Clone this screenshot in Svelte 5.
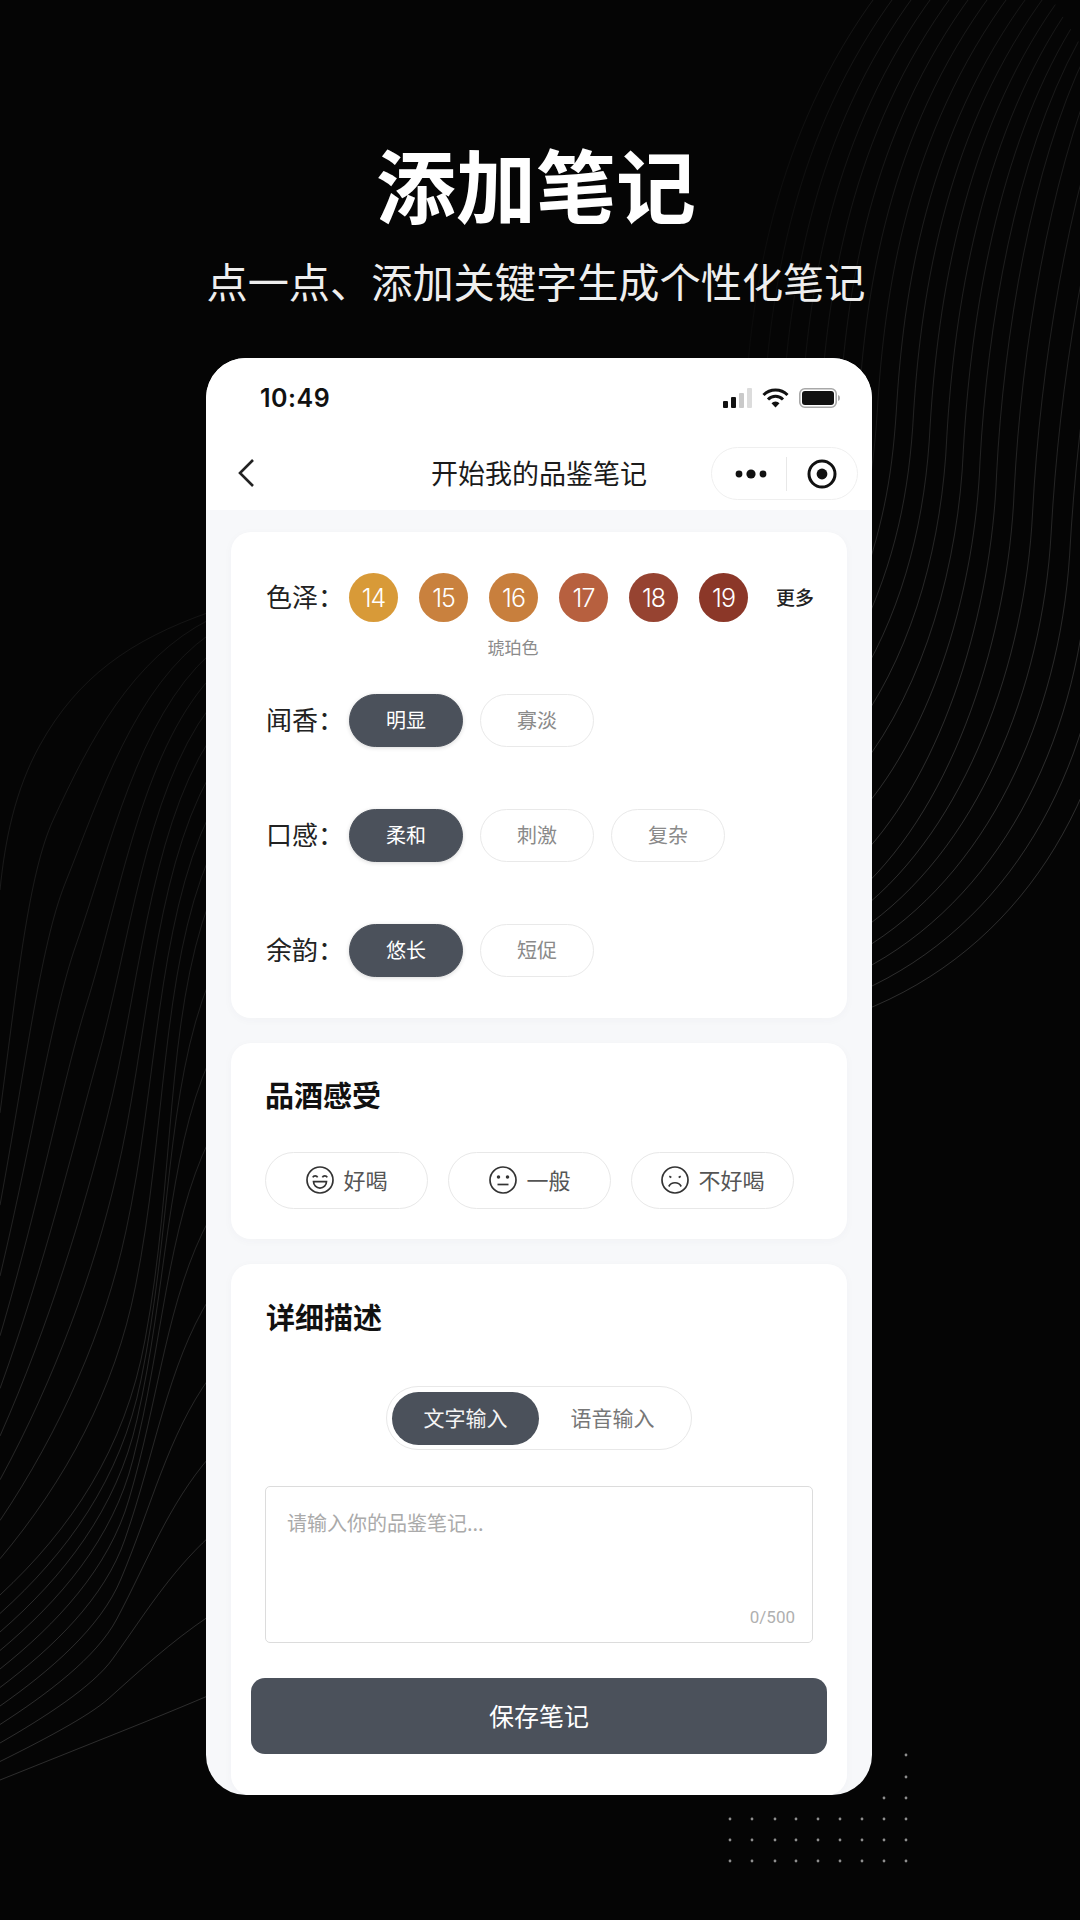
<script>
	const swatches = [
		{ n: 14, c: '#d89a38' },
		{ n: 15, c: '#c9813e' },
		{ n: 16, c: '#c87f3d' },
		{ n: 17, c: '#b7603f' },
		{ n: 18, c: '#964331' },
		{ n: 19, c: '#8b3728' }
	];
	const rows = [
		{ label: '闻香：', opts: ['明显', '寡淡'] },
		{ label: '口感：', opts: ['柔和', '刺激', '复杂'] },
		{ label: '余韵：', opts: ['悠长', '短促'] }
	];

	const lerp = (a, b, t) => [a[0] + (b[0] - a[0]) * t, a[1] + (b[1] - a[1]) * t];
	const toPath = (p) =>
		`M${p[0]} C${p[1]} ${p[2]} ${p[3]} C${p[4]} ${p[5]} ${p[6]}`.replace(/(\d+\.\d)\d+/g, '$1');

	// the wave backgrounds: each line is a blend of three hand placed key curves
	const rightKeys = [
		[[860, 590], [885, 520], [893, 470], [897, 400], [905, 280], [930, 120], [1040, -20]],
		[[860, 880], [950, 790], [1000, 620], [1005, 480], [1012, 340], [1040, 170], [1090, 60]],
		[[860, 1012], [1020, 950], [1110, 800], [1125, 620], [1135, 450], [1160, 300], [1200, 100]]
	];
	const leftKeys = [
		[[0, 890], [5, 840], [15, 790], [40, 745], [77.5, 677.5], [130, 640], [210, 612]],
		[[0, 1595], [70, 1530], [125, 1450], [145, 1340], [175, 1180], [165, 1020], [210, 900]],
		[[0, 1780], [35, 1766], [85, 1746], [105, 1738], [135, 1726], [170, 1712], [210, 1695]]
	];
	const easing = [0.5, 0.7, 0.9, 0.9, 0.9, 1.3, 1.6];

	const rightLines = Array.from({ length: 14 }, (_, i) => {
		const u = i / 13;
		const [a, b, t] =
			u < 0.5 ? [rightKeys[0], rightKeys[1], u * 2] : [rightKeys[1], rightKeys[2], u * 2 - 1];
		return toPath(a.map((p, k) => lerp(p, b[k], t)));
	});
	// these run on above the phone, towards the title
	const upperLines = Array.from({ length: 8 }, (_, i) =>
		toPath(rightKeys[0].map(([x, y]) => [x - 19 * (i + 1), y]))
	);
	const leftLines = Array.from({ length: 21 }, (_, i) => {
		const u = i / 20;
		const [a, b, t] =
			u < 0.5 ? [leftKeys[0], leftKeys[1], u * 2] : [leftKeys[1], leftKeys[2], u * 2 - 1];
		return toPath(a.map((p, k) => lerp(p, b[k], u < 0.5 ? Math.pow(t, easing[k]) : t)));
	});

	const dots = [];
	for (const y of [1819, 1840, 1861]) {
		for (const x of [730, 752, 775, 796, 818, 840, 862, 884, 906]) dots.push([x, y]);
	}
	dots.push([884, 1798], [906, 1798], [906, 1777], [906, 1755]);
</script>

<div class="page">
	<svg class="waves" width="1080" height="1920" viewBox="0 0 1080 1920" fill="none">
		<defs>
			<linearGradient id="fade" gradientUnits="userSpaceOnUse" x1="0" y1="0" x2="0" y2="800">
				<stop offset="0" stop-color="#fff" stop-opacity="0.07" />
				<stop offset="1" stop-color="#fff" stop-opacity="0.16" />
			</linearGradient>
			<linearGradient id="fade-top" gradientUnits="userSpaceOnUse" x1="740" y1="0" x2="900" y2="0">
				<stop offset="0" stop-color="#fff" stop-opacity="0.02" />
				<stop offset="1" stop-color="#fff" stop-opacity="0.08" />
			</linearGradient>
			<linearGradient id="fade-left" gradientUnits="userSpaceOnUse" x1="0" y1="620" x2="0" y2="1700">
				<stop offset="0" stop-color="#fff" stop-opacity="0.06" />
				<stop offset="1" stop-color="#fff" stop-opacity="0.16" />
			</linearGradient>
		</defs>
		{#each rightLines as d}
			<path {d} stroke="url(#fade)" />
		{/each}
		{#each upperLines as d}
			<path {d} stroke="url(#fade-top)" />
		{/each}
		{#each leftLines as d}
			<path {d} stroke="url(#fade-left)" />
		{/each}
		{#each dots as [x, y]}
			<circle cx={x} cy={y} r="1.4" fill="#8e8e8e" />
		{/each}
	</svg>

	<h1>添加笔记</h1>
	<p class="sub">点一点、添加关键字生成个性化笔记</p>

	<div class="phone">
		<div class="status">
			<span class="time">10:49</span>
			<div class="status-icons">
				<svg width="29" height="20" viewBox="0 0 29 20">
					<rect x="0" y="13" width="5" height="7" rx="1" fill="#111" />
					<rect x="8" y="9" width="5" height="11" rx="1" fill="#111" />
					<rect x="16" y="5" width="5" height="15" rx="1" fill="#c9c9c9" />
					<rect x="24" y="0" width="5" height="20" rx="1" fill="#dcdcdc" />
				</svg>
				<svg width="27" height="20" viewBox="0 0 27 20" fill="none" stroke="#111" stroke-width="3">
					<path d="M1.5 7a17 17 0 0 1 24 0" />
					<path d="M6 11.5a10.5 10.5 0 0 1 15 0" />
					<path d="M13.5 19.5l-4-4.2a5.6 5.6 0 0 1 8 0z" fill="#111" stroke="none" />
				</svg>
				<svg width="42" height="20" viewBox="0 0 42 20">
					<rect x="0.8" y="0.8" width="36.4" height="18.4" rx="5" fill="none" stroke="#a8a8a8" stroke-width="1.6" />
					<rect x="3" y="3" width="32" height="14" rx="3" fill="#111" />
					<path d="M39 7v6a3 3 0 0 0 2-3 3 3 0 0 0-2-3z" fill="#a8a8a8" />
				</svg>
			</div>
		</div>

		<div class="nav">
			<svg class="back" width="18" height="30" viewBox="0 0 18 30" fill="none" stroke="#222" stroke-width="2.6">
				<path d="M16 2 3 15l13 13" />
			</svg>
			<span class="nav-title">开始我的品鉴笔记</span>
			<div class="capsule">
				<svg width="32" height="12" viewBox="0 0 32 12" fill="#111">
					<circle cx="4" cy="6" r="3.4" />
					<circle cx="16" cy="6" r="4.6" />
					<circle cx="28" cy="6" r="3.4" />
				</svg>
				<i class="capsule-line"></i>
				<svg width="30" height="30" viewBox="0 0 30 30">
					<circle cx="15" cy="15" r="13" fill="none" stroke="#111" stroke-width="3" />
					<circle cx="15" cy="15" r="5.4" fill="#111" />
				</svg>
			</div>
		</div>

		<div class="body">
			<section class="card notes">
				<div class="row">
					<span class="label">色泽：</span>
					<div class="swatches">
						{#each swatches as s}
							<span class="swatch" style="background-color: {s.c}">{s.n}</span>
						{/each}
					</div>
					<span class="more">更多</span>
				</div>
				<div class="caption">琥珀色</div>
				<div class="rows">
					{#each rows as row}
						<div class="row">
							<span class="label">{row.label}</span>
							<div class="pills">
								{#each row.opts as opt, i}
									<span class="pill" class:on={i === 0}>{opt}</span>
								{/each}
							</div>
						</div>
					{/each}
				</div>
			</section>

			<section class="card feel">
				<h2>品酒感受</h2>
				<div class="moods">
					<div class="mood">
						<svg width="30" height="30" viewBox="0 0 30 30" fill="none" stroke="#333" stroke-width="1.7">
							<circle cx="15" cy="15" r="13" />
							<path d="M7.8 12.4a2.6 2.6 0 0 1 4.8 0M17.4 12.4a2.6 2.6 0 0 1 4.8 0" />
							<path d="M8.5 16.6h13a6.5 6.5 0 0 1-13 0z" />
						</svg>
						<span>好喝</span>
					</div>
					<div class="mood">
						<svg width="30" height="30" viewBox="0 0 30 30" fill="none" stroke="#333" stroke-width="1.7">
							<circle cx="15" cy="15" r="13" />
							<circle cx="10.5" cy="12" r="0.9" fill="#333" />
							<circle cx="19.5" cy="12" r="0.9" fill="#333" />
							<path d="M9.5 19.5h11" />
						</svg>
						<span>一般</span>
					</div>
					<div class="mood">
						<svg width="30" height="30" viewBox="0 0 30 30" fill="none" stroke="#333" stroke-width="1.7">
							<circle cx="15" cy="15" r="13" />
							<path d="M9.3 11.2l2 1.2M20.7 11.2l-2 1.2" />
							<path d="M8.8 21.5a7 7 0 0 1 12.4 0" />
						</svg>
						<span>不好喝</span>
					</div>
				</div>
			</section>

			<section class="card detail">
				<h2>详细描述</h2>
				<div class="switch">
					<span class="tab on">文字输入</span>
					<span class="tab">语音输入</span>
				</div>
				<div class="input">
					<span class="placeholder">请输入你的品鉴笔记...</span>
					<span class="count">0/500</span>
				</div>
				<button class="save">保存笔记</button>
			</section>
		</div>
	</div>
</div>

<style>
	:global(body) {
		background: #050505;
	}
	.page {
		position: relative;
		width: 1080px;
		height: 1920px;
		overflow: hidden;
		background: #050505;
		display: flex;
		flex-direction: column;
		align-items: center;
		font-family: 'Noto Sans CJK SC', 'Noto Sans', sans-serif;
	}
	.waves {
		position: absolute;
		left: 0;
		top: 0;
	}
	h1 {
		position: relative;
		margin: 137px 8px 0 0;
		color: #fff;
		font-size: 80px;
		line-height: 90px;
		font-weight: 700;
	}
	.sub {
		position: relative;
		margin: 28px 8px 0 0;
		color: #eee;
		font-size: 41.2px;
		line-height: 50px;
		font-weight: 400;
	}
	.phone {
		position: relative;
		width: 666px;
		height: 1437px;
		margin: 53px 2px 0 0;
		border-radius: 40px;
		background: #f7f8fa;
		overflow: hidden;
		display: flex;
		flex-direction: column;
	}
	.status {
		height: 80px;
		background: #fff;
		display: flex;
		align-items: center;
		justify-content: space-between;
		padding: 0 31px 0 54px;
	}
	.time {
		font-family: Inter, sans-serif;
		font-size: 25px;
		font-weight: 600;
		color: #111;
		letter-spacing: 0.5px;
	}
	.status-icons {
		display: flex;
		align-items: center;
		gap: 10px;
	}
	.nav {
		position: relative;
		height: 72px;
		background: #fff;
		display: flex;
		align-items: center;
		justify-content: center;
		padding-bottom: 4px;
		box-sizing: border-box;
	}
	.back {
		position: absolute;
		left: 31px;
		top: 20px;
	}
	.nav-title {
		font-size: 27px;
		color: #1b1b1b;
	}
	.capsule {
		position: absolute;
		right: 14px;
		top: 9px;
		width: 147px;
		height: 53px;
		box-sizing: border-box;
		border: 1px solid #efefef;
		border-radius: 27px;
		display: flex;
		align-items: center;
		padding-left: 23px;
	}
	.capsule-line {
		width: 1px;
		height: 34px;
		margin: 0 20px 0 19px;
		background: #e8e8e8;
	}
	.body {
		flex: 1;
		padding: 22px 25px 0;
		display: flex;
		flex-direction: column;
		gap: 25px;
	}
	.card {
		background: #fff;
		border-radius: 20px;
		padding: 0 35px;
		box-shadow: 0 2px 10px rgba(60, 70, 90, 0.03);
	}
	.notes {
		height: 486px;
		box-sizing: border-box;
		padding-top: 39px;
	}
	.row {
		display: flex;
		align-items: center;
		height: 53px;
	}
	.label {
		width: 83px;
		flex: none;
		padding-bottom: 4px;
		font-size: 26px;
		color: #222;
	}
	.swatches {
		display: flex;
		flex: none;
		gap: 21px;
	}
	.swatch {
		width: 49px;
		height: 49px;
		border-radius: 50%;
		display: flex;
		align-items: center;
		justify-content: center;
		color: #fff;
		font-family: Inter, sans-serif;
		font-size: 25px;
		font-weight: 300;
		letter-spacing: -1px;
	}
	.more {
		flex: none;
		margin-left: 28px;
		padding-bottom: 2px;
		font-size: 19px;
		font-weight: 500;
		color: #222;
		white-space: nowrap;
	}
	.caption {
		width: 100px;
		margin: 12px 0 36px 197px;
		text-align: center;
		font-size: 17px;
		line-height: 22px;
		color: #8b8b8b;
	}
	.rows {
		display: flex;
		flex-direction: column;
		gap: 62px;
	}
	.pills {
		display: flex;
		gap: 17px;
	}
	.pill {
		width: 114px;
		height: 53px;
		box-sizing: border-box;
		padding-bottom: 2px;
		border: 1px solid #e9e9e9;
		border-radius: 27px;
		display: flex;
		align-items: center;
		justify-content: center;
		font-size: 20px;
		color: #8a8a8a;
	}
	.pill.on {
		background: #4b515b;
		border-color: #4b515b;
		color: #fff;
		box-shadow: 0 1px 4px rgba(0, 0, 0, 0.15);
	}
	h2 {
		margin: -2px 0 0;
		font-size: 29px;
		line-height: 40px;
		font-weight: 600;
		color: #111;
	}
	.feel {
		height: 196px;
		box-sizing: border-box;
		padding-top: 33px;
		padding-left: 34px;
	}
	.moods {
		display: flex;
		gap: 20px;
		margin-top: 38px;
	}
	.mood {
		width: 163px;
		height: 57px;
		box-sizing: border-box;
		padding-bottom: 1px;
		border: 1px solid #e8e8e8;
		border-radius: 29px;
		display: flex;
		align-items: center;
		justify-content: center;
		gap: 8px;
		font-size: 22px;
		color: #555;
	}
	.mood span {
		padding-bottom: 3px;
	}
	.detail {
		flex: 1;
		padding-top: 34px;
	}
	.switch {
		width: 306px;
		height: 64px;
		box-sizing: border-box;
		margin: 50px auto 0;
		padding: 5px;
		border: 1px solid #e8e8e8;
		border-radius: 32px;
		display: flex;
		align-items: center;
	}
	.tab {
		flex: 1;
		height: 53px;
		box-sizing: border-box;
		padding-bottom: 2px;
		border-radius: 27px;
		display: flex;
		align-items: center;
		justify-content: center;
		font-size: 21px;
		color: #777;
	}
	.tab.on {
		background: #4b515b;
		color: #f4f4f4;
	}
	.input {
		position: relative;
		height: 157px;
		box-sizing: border-box;
		margin: 36px -1px 0;
		padding: 21px 21px;
		border: 1px solid #dcdcdc;
		border-radius: 5px;
	}
	.placeholder {
		font-size: 20px;
		line-height: 30px;
		color: #aaa;
	}
	.count {
		position: absolute;
		right: 17px;
		bottom: 15px;
		font-family: Roboto, sans-serif;
		font-size: 17px;
		color: #b0b0b0;
	}
	.save {
		display: block;
		width: 576px;
		height: 76px;
		margin: 35px 0 0 -15px;
		padding: 0 0 2px;
		border: none;
		border-radius: 14px;
		background: #4b515b;
		color: #fff;
		font-family: inherit;
		font-size: 25px;
	}
</style>
